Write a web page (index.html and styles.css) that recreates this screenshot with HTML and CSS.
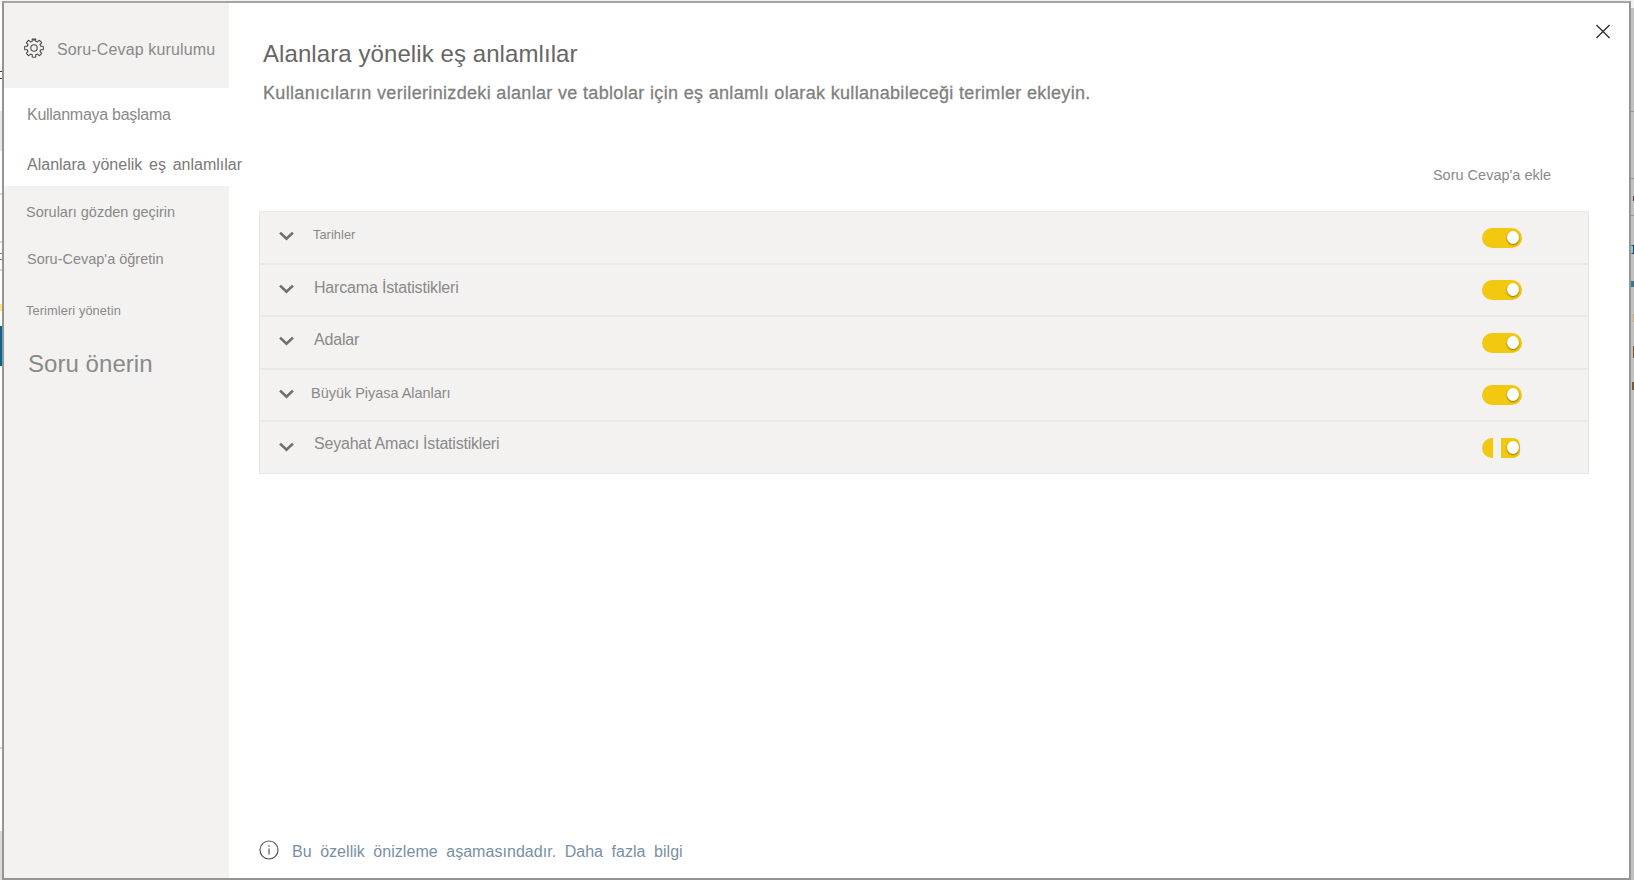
FILE: index.html
```html
<!DOCTYPE html>
<html lang="tr">
<head>
<meta charset="utf-8">
<title>Soru-Cevap kurulumu</title>
<link rel="stylesheet" href="styles.css">
</head>
<body>
<div class="edge edge-left">
  <span class="mark m-tick1"></span><span class="mark m-tick2"></span><span class="mark m-band"></span><span class="mark m-line1"></span><span class="mark m-line2"></span><span class="mark m-e"></span><span class="mark m-line3"></span><span class="mark m-yellow"></span><span class="mark m-blue"></span><span class="mark m-line4"></span><span class="mark m-foot"></span>
</div>
<div class="edge edge-right">
  <span class="mark r-line1"></span><span class="mark r-line2"></span><span class="mark r-line3"></span><span class="mark r-dot"></span><span class="mark r-box"></span><span class="mark r-teal"></span><span class="mark r-sand"></span><span class="mark r-brown"></span><span class="mark r-brown2"></span>
</div>
<div class="dialog">
  <aside class="sidebar">
    <header class="side-head">
      <svg class="gear" viewBox="0 0 20 20"><path d="M8.300 3.300 8.200 1.400Q8.200.8 8.700.7H9.100L10 2.400 10.900.7H11.300Q11.800.8 11.800 1.400L11.700 3.300 13.500 4 14.800 2.600Q15.200 2.200 15.600 2.500L17.500 4.400Q17.800 4.800 17.400 5.200L16 6.500 16.700 8.300 18.600 8.200Q19.200 8.200 19.300 8.700V11.300Q19.200 11.800 18.600 11.800L16.700 11.700 16 13.500 17.400 14.800Q17.800 15.200 17.500 15.600L15.600 17.500Q15.200 17.800 14.800 17.400L13.500 16 11.700 16.700 11.800 18.600Q11.800 19.200 11.300 19.300H8.700Q8.200 19.200 8.200 18.600L8.300 16.700 6.500 16 5.200 17.400Q4.800 17.800 4.400 17.500L2.500 15.600Q2.200 15.200 2.600 14.800L4 13.500 3.300 11.700 1.400 11.800Q.8 11.800.7 11.300V8.700Q.8 8.200 1.400 8.200L3.300 8.300 4 6.500 2.600 5.200Q2.200 4.800 2.500 4.400L4.400 2.500Q4.800 2.200 5.200 2.600L6.500 4z"/><circle cx="10" cy="10" r="3.200"/></svg>
      <span class="side-title">Soru-Cevap kurulumu</span>
    </header>
    <nav class="nav">
      <a class="item start">Kullanmaya başlama</a>
      <a class="item synonyms">Alanlara yönelik eş anlamlılar</a>
      <a class="item review">Soruları gözden geçirin</a>
      <a class="item teach">Soru-Cevap'a öğretin</a>
      <a class="item terms">Terimleri yönetin</a>
      <a class="item suggest">Soru önerin</a>
    </nav>
  </aside>
  <main class="main">
    <svg class="close" viewBox="0 0 16 16"><path d="M1 1 15 15M15 1 1 15"/></svg>
    <h1 class="title">Alanlara yönelik eş anlamlılar</h1>
    <p class="subtitle">Kullanıcıların verilerinizdeki alanlar ve tablolar için eş anlamlı olarak kullanabileceği terimler ekleyin.</p>
    <div class="column-head"><span>Soru Cevap'a ekle</span></div>
    <section class="list">
      <div class="row first"><svg class="chev" viewBox="0 0 14 9"><path d="M1 1.300 7 7.100 13 1.300"/></svg><span class="name dates">Tarihler</span><span class="toggle"><i class="knob"></i></span></div>
      <div class="row"><svg class="chev" viewBox="0 0 14 9"><path d="M1 1.300 7 7.100 13 1.300"/></svg><span class="name spend">Harcama İstatistikleri</span><span class="toggle"><i class="knob"></i></span></div>
      <div class="row tall"><svg class="chev" viewBox="0 0 14 9"><path d="M1 1.300 7 7.100 13 1.300"/></svg><span class="name islands">Adalar</span><span class="toggle"><i class="knob"></i></span></div>
      <div class="row"><svg class="chev" viewBox="0 0 14 9"><path d="M1 1.300 7 7.100 13 1.300"/></svg><span class="name markets">Büyük Piyasa Alanları</span><span class="toggle"><i class="knob"></i></span></div>
      <div class="row last"><svg class="chev" viewBox="0 0 14 9"><path d="M1 1.300 7 7.100 13 1.300"/></svg><span class="name purpose">Seyahat Amacı İstatistikleri</span><span class="toggle split"><i class="knob"></i></span></div>
    </section>
    <footer class="note">
      <svg class="info" viewBox="0 0 20 20"><circle cx="10" cy="10" r="9"/><path d="M10 8.500v6M10 5.300v1.500"/></svg>
      <span class="note-text">Bu özellik önizleme aşamasındadır. Daha fazla bilgi</span>
    </footer>
  </main>
</div>
</body>
</html>
```
FILE: styles.css
```css
* { box-sizing: border-box; }
body { margin: 0; width: 1634px; height: 880px; overflow: hidden; position: relative; background: #f3f2f1; font-family: "Liberation Sans", Arial, sans-serif; color: #8a8988; }
.dialog { position: absolute; left: 2px; top: 1px; width: 1629px; height: 879px; display: flex; background: #fff; border: 2px solid #969594; border-top-color: #a5a5a4; }
.edge { position: absolute; top: 2px; bottom: 0; overflow: hidden; }
.edge-left { left: 0; width: 3px; background: #fff; }
.edge-right { left: 1631px; width: 3px; top: 8px; background: #c1c1c0; }
.mark { position: absolute; left: 0; width: 3px; }
.m-tick1, .m-tick2 { height: 1px; background: #5a3012; }
.m-tick1 { top: 69px; } .m-tick2 { top: 76px; }
.m-band { top: 109px; height: 40px; background: #e9e8e7; }
.m-line1, .m-line2, .m-line3, .m-line4 { height: 2px; background: #dcdbda; }
.m-line1 { top: 191px; } .m-line2 { top: 239px; } .m-line3 { top: 267px; } .m-line4 { top: 745px; }
.m-e { top: 251px; height: 7px; width: 2px; border-top: 1px solid #777; border-bottom: 1px solid #777; }
.m-yellow { top: 302px; height: 7px; background: #fbe983; }
.m-blue { top: 324px; height: 40px; background: #086691; }
.m-foot { top: 829px; height: 50px; background: #d9d9d8; }
.r-line1, .r-line2, .r-line3 { height: 1px; background: #969594; }
.r-line1 { top: 103px; } .r-line2 { top: 170px; } .r-line3 { top: 207px; }
.r-dot { top: 188px; left: 2px; height: 5px; background: #602b52; }
.r-box { top: 237px; height: 9px; border: 1px solid #21406b; border-left-color: #8dc9e2; background: #8dc9e2; }
.r-teal { top: 273px; height: 6px; background: #397590; }
.r-sand { top: 306px; left: 2px; height: 8px; background: #d5a65d; }
.r-brown { top: 338px; left: 2px; height: 12px; background: #874a18; }
.r-brown2 { top: 374px; left: 1px; height: 8px; background: #7e5635; }

.sidebar { width: 225px; flex: none; background: #f3f2f1; }
.side-head { height: 85px; display: flex; align-items: center; padding: 7px 0 0 20px; }
.gear { width: 20px; height: 20px; margin-top: -3px; fill: none; stroke: #4d4c4b; stroke-width: 1.100; stroke-linejoin: round; }
.side-title { margin: 2px 0 0 13px; font-size: 16px; letter-spacing: .14px; white-space: nowrap; }
.nav { display: flex; flex-direction: column; }
.item { display: flex; align-items: center; flex: none; padding-left: 22px; white-space: nowrap; }
.start { height: 51px; padding: 2px 0 0 23px; background: #fff; font-size: 16px; letter-spacing: -.27px; }
.synonyms { height: 47px; padding: 5px 0 0 23px; background: #fff; font-size: 16px; word-spacing: 2.300px; color: #7a7978; }
.review { height: 50px; padding-top: 1px; font-size: 14.500px; }
.teach { height: 46px; padding-left: 23px; font-size: 14.500px; }
.terms { height: 56px; font-size: 12.800px; letter-spacing: .1px; }
.suggest { height: 52px; padding-left: 24px; font-size: 24px; letter-spacing: .05px; }

.main { flex: 1; min-width: 0; display: flex; flex-direction: column; padding: 0 40px 0 30px; position: relative; }
.close { position: absolute; right: 18px; top: 21px; width: 16px; height: 15px; fill: none; stroke: #333; stroke-width: 1.500; }
.title { margin: 37px 0 0 4px; font-size: 24px; line-height: 28px; font-weight: 400; letter-spacing: .08px; color: #676665; white-space: nowrap; }
.subtitle { margin: 14px 0 0 4px; font-size: 18px; line-height: 22px; letter-spacing: .33px; color: #807f7e; -webkit-text-stroke: .3px #807f7e; white-space: nowrap; }
.column-head { display: flex; justify-content: flex-end; margin-top: 61px; padding-right: 38px; font-size: 14.500px; line-height: 20px; }
.list { margin-top: 26px; height: 263px; border: 1px solid #e9e8e7; background: #f3f2f1; }
.row { display: flex; align-items: center; height: 52px; padding: 0 66px 0 19px; }
.row:not(.last) { border-bottom: 2px solid #eae9e8; }
.first, .tall { height: 53px; }
.chev { width: 15px; height: 10px; margin-top: -3px; fill: none; stroke: #6f6e6d; stroke-width: 2.400; }
.name { margin: -4px 0 0 20px; font-size: 16px; letter-spacing: -.18px; white-space: nowrap; }
.toggle { margin-left: auto; width: 40px; height: 20px; border-radius: 10px; background: #f2c811; display: flex; justify-content: flex-end; padding: 3px 3px 0 0; }
.knob { width: 12px; height: 13px; border-radius: 50%; background: #fff; box-shadow: 0 1px 2px #8a7000; }
.split { width: 38px; margin-right: 2px; padding-right: 1px; border-radius: 10px 7px 7px 10px; background: linear-gradient(90deg, #f2c811 11px, #fff 11px, #fff 19px, #f2c811 19px); }
.split { background: linear-gradient(90deg, #f2c811 11px, #f3f2f1 11px, #f3f2f1 19px, #f2c811 19px); }
.dates { margin: -6px 0 0 19px; font-size: 12.800px; letter-spacing: .05px; }
.islands { margin-top: -6px; }
.markets { margin: -5px 0 0 17px; font-size: 14.500px; letter-spacing: -.03px; }
.purpose { margin-top: -8px; letter-spacing: -.21px; }
.note { display: flex; align-items: center; margin-top: 365px; height: 22px; }
.info { width: 20px; height: 20px; fill: none; stroke: #555; stroke-width: 1.200; }
.note-text { margin: 3px 0 0 13px; font-size: 16px; letter-spacing: .04px; word-spacing: 4px; color: #7890a3; white-space: nowrap; }
```
